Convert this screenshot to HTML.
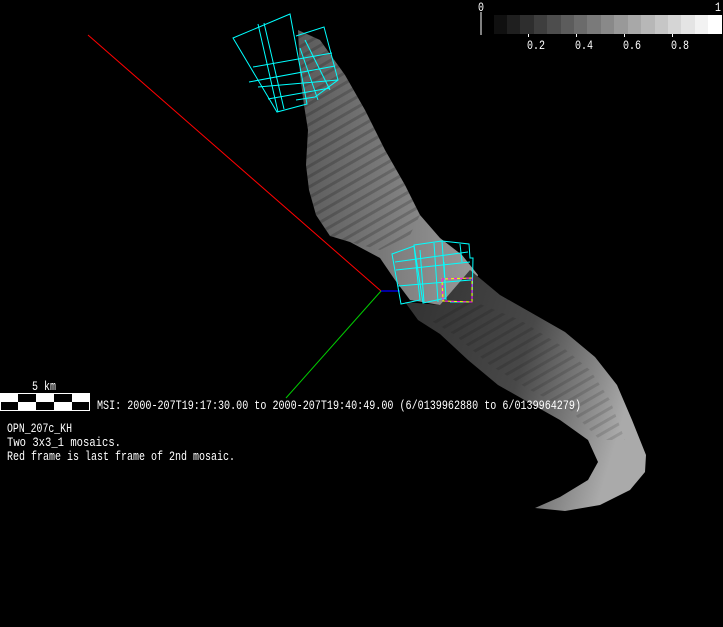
<!DOCTYPE html>
<html><head><meta charset="utf-8"><style>
html,body{margin:0;padding:0;background:#000;width:723px;height:627px;overflow:hidden}
svg{position:absolute;left:0;top:0}
.t{font-family:"Liberation Mono",monospace;font-size:12.5px;fill:#fff}
</style></head><body>
<svg width="723" height="627" viewBox="0 0 723 627" xmlns="http://www.w3.org/2000/svg">
<defs>
<linearGradient id="g1" x1="0" y1="0" x2="1" y2="0">
<stop offset="0" stop-color="#5a5a5a"/><stop offset="0.6" stop-color="#828282"/><stop offset="1" stop-color="#9a9a9a"/>
</linearGradient>
<linearGradient id="g2" x1="0" y1="0" x2="1" y2="0.3">
<stop offset="0" stop-color="#303030"/><stop offset="0.55" stop-color="#484848"/><stop offset="0.85" stop-color="#888"/><stop offset="1" stop-color="#aaa"/>
</linearGradient>
<pattern id="st" width="9" height="9" patternUnits="userSpaceOnUse" patternTransform="rotate(60)">
<rect width="3" height="9" fill="#000" opacity="0.18"/>
</pattern>
</defs>
<rect width="723" height="627" fill="#000"/>
<path d="M298,30 L320,40 L345,75 L365,110 L385,150 L405,185 L420,215 L440,238 L462,255 L478,275 L470,300 L440,305 L410,300 L395,280 L380,258 L350,242 L330,236 L316,215 L309,190 L306,165 L308,130 L304,105 L300,75 Z" fill="url(#g1)"/>
<path d="M298,30 L320,40 L345,75 L365,110 L385,150 L405,185 L420,215 L410,235 L380,250 L350,242 L330,236 L316,215 L309,190 L306,165 L308,130 L304,105 L300,75 Z" fill="url(#st)"/>
<path d="M470,270 L500,295 L530,312 L565,332 L595,357 L617,385 L632,420 L646,455 L645,472 L630,490 L600,505 L565,511 L535,508 L560,497 L588,480 L598,462 L588,440 L560,420 L528,402 L498,385 L468,360 L440,334 L418,320 L405,302 L440,305 Z" fill="url(#g2)"/>
<path d="M470,300 L520,320 L560,345 L590,370 L610,400 L625,440 L600,440 L570,410 L530,390 L490,365 L455,335 L430,320 Z" fill="url(#st)" opacity="0.7"/>
<line x1="88" y1="35" x2="381" y2="291" stroke="#f00" stroke-width="1"/>
<line x1="381" y1="291" x2="400" y2="291" stroke="#00f" stroke-width="1.2"/>
<line x1="381" y1="291" x2="286" y2="398" stroke="#0c0" stroke-width="1"/>
<g stroke="#0ff" fill="none" stroke-width="1">
<path d="M233,38 L290,14 L307,104 L277,112 Z"/>
<path d="M258,24 L278,112 M264,23 L284,109"/>
<path d="M253,67 L332,53 M258,87 L338,80 M268,99 L330,88 M249,82 L335,66"/>
<path d="M296,36 L324,27 L338,80 L315,97 L296,100"/>
<path d="M300,48 L318,100 M305,40 L330,90"/>
</g>
<g stroke="#0ff" fill="none" stroke-width="1">
<path d="M392,254 L414,246 L420,300 L401,304 Z"/>
<path d="M414,245 L442,241 L446,298 L423,303 Z"/>
<path d="M442,241 L469,244 L470,258 L473,258 L472,302 L450,302"/>
<path d="M396,270 L470,262 M398,286 L471,280 M395,262 L468,252"/>
<path d="M420,250 L424,302 M434,243 L438,302 M444,262 L446,300 M460,244 L462,262"/>
</g>
<path d="M442,279 L472,278 L472,302 L443,301 Z" fill="none" stroke="#ff0" stroke-width="1"/>
<path d="M442,279 L472,278 L472,302 L443,301 Z" fill="none" stroke="#f0f" stroke-width="1" stroke-dasharray="3 3"/>
<line x1="481" y1="12" x2="481" y2="35" stroke="#fff"/>
<text x="478" y="11" class="t" textLength="6" lengthAdjust="spacingAndGlyphs">0</text>
<text x="715" y="11" class="t" textLength="6" lengthAdjust="spacingAndGlyphs">1</text>
<g>
<rect x="494" y="15" width="14" height="19" fill="#101010"/>
<rect x="507" y="15" width="14" height="19" fill="#1f1f1f"/>
<rect x="520" y="15" width="14" height="19" fill="#2e2e2e"/>
<rect x="534" y="15" width="14" height="19" fill="#3e3e3e"/>
<rect x="547" y="15" width="14" height="19" fill="#4d4d4d"/>
<rect x="561" y="15" width="14" height="19" fill="#5c5c5c"/>
<rect x="574" y="15" width="14" height="19" fill="#6b6b6b"/>
<rect x="587" y="15" width="14" height="19" fill="#7a7a7a"/>
<rect x="601" y="15" width="14" height="19" fill="#898989"/>
<rect x="614" y="15" width="14" height="19" fill="#999"/>
<rect x="628" y="15" width="14" height="19" fill="#a8a8a8"/>
<rect x="641" y="15" width="14" height="19" fill="#b7b7b7"/>
<rect x="655" y="15" width="14" height="19" fill="#c6c6c6"/>
<rect x="668" y="15" width="14" height="19" fill="#d5d5d5"/>
<rect x="681" y="15" width="14" height="19" fill="#e4e4e4"/>
<rect x="695" y="15" width="14" height="19" fill="#f2f2f2"/>
<rect x="708" y="15" width="14" height="19" fill="#fff"/>
</g>
<g stroke="#fff"><line x1="528.5" y1="34" x2="528.5" y2="37"/><line x1="576.5" y1="34" x2="576.5" y2="37"/><line x1="624.5" y1="34" x2="624.5" y2="37"/><line x1="672.5" y1="34" x2="672.5" y2="37"/></g>
<text x="527" y="49" class="t" textLength="18" lengthAdjust="spacingAndGlyphs">0.2</text>
<text x="575" y="49" class="t" textLength="18" lengthAdjust="spacingAndGlyphs">0.4</text>
<text x="623" y="49" class="t" textLength="18" lengthAdjust="spacingAndGlyphs">0.6</text>
<text x="671" y="49" class="t" textLength="18" lengthAdjust="spacingAndGlyphs">0.8</text>
<text x="32" y="390" class="t" textLength="24" lengthAdjust="spacingAndGlyphs">5 km</text>
<rect x="0" y="393" width="90" height="18" fill="#fff"/>
<rect x="18" y="394" width="18" height="8" fill="#000"/>
<rect x="54" y="394" width="18" height="8" fill="#000"/>
<rect x="1" y="402" width="17" height="8" fill="#000"/>
<rect x="36" y="402" width="18" height="8" fill="#000"/>
<rect x="72" y="402" width="17" height="8" fill="#000"/>
<text x="97" y="409" class="t" textLength="484" lengthAdjust="spacingAndGlyphs">MSI:  2000-207T19:17:30.00 to 2000-207T19:40:49.00 (6/0139962880 to 6/0139964279)</text>
<text x="7" y="432" class="t" textLength="65" lengthAdjust="spacingAndGlyphs">OPN_207c_KH</text>
<text x="7" y="446" class="t" textLength="114" lengthAdjust="spacingAndGlyphs">Two 3x3_1  mosaics.</text>
<text x="7" y="460" class="t" textLength="228" lengthAdjust="spacingAndGlyphs">Red frame is last frame of 2nd mosaic.</text>
</svg>
</body></html>
